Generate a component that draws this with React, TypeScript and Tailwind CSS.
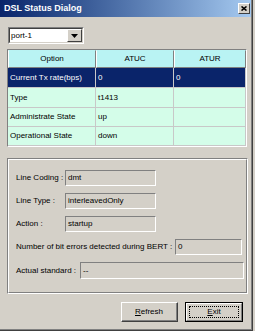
import React from 'react';

interface Row {
  option: string;
  atuc: string;
  atur: string;
  selected?: boolean;
  height: string;
}

const rows: Row[] = [
  { option: 'Current Tx rate(bps)', atuc: '0', atur: '0', selected: true, height: 'h-[20px]' },
  { option: 'Type', atuc: 't1413', atur: '', height: 'h-[20px]' },
  { option: 'Administrate State', atuc: 'up', atur: '', height: 'h-[19px]' },
  { option: 'Operational State', atuc: 'down', atur: '', height: 'h-[19px]' },
];

function Field({ value, className }: { value: string; className: string }) {
  return (
    <div
      className={`flex items-center pl-[2px] border border-t-[#808080] border-l-[#808080] border-r-white border-b-white bg-[#d4d0c8] ${className}`}
    >
      {value}
    </div>
  );
}

function Cell({ text, row }: { text: string; row: Row }) {
  return (
    <div
      className={`${row.height} flex items-center pl-[2px] border-r border-b border-[#c8c8c8] ${
        row.selected ? 'bg-[#0a246a] text-white' : 'bg-[#d4fde9]'
      }`}
    >
      {text}
    </div>
  );
}

export default function App() {
  return (
    <div className="w-[255px] h-[331px] overflow-hidden bg-[#d4d0c8] font-['Liberation_Sans',Arial,sans-serif] text-[8px] leading-none text-black">
      <div className="w-[253px] h-[331px] border-r border-b border-[#404040]">
        <div className="h-full flex flex-col border-r border-b border-[#808080]">
          {/* title bar */}
          <div className="h-[17px] flex items-center pl-[4px] pr-[1px] bg-linear-to-r from-[#0a246a] to-[#a6caf0]">
            <span className="flex-1 text-white font-bold text-[9px]">DSL Status Dialog</span>
            <div className="w-[12px] h-[11px] flex items-center justify-center bg-[#d4d0c8] border border-t-white border-l-white border-r-[#404040] border-b-[#404040]">
              <svg width="6" height="5" viewBox="0 0 6 5">
                <path d="M0.5 0.5 L5.5 4.5 M5.5 0.5 L0.5 4.5" stroke="#000" strokeWidth="1.6" />
              </svg>
            </div>
          </div>

          {/* port combo */}
          <div className="mt-[10px] ml-[8px] w-[76px] h-[17px] border border-t-[#808080] border-l-[#808080] border-r-white border-b-white">
            <div className="h-full flex bg-white border border-t-[#404040] border-l-[#404040] border-r-[#d4d0c8] border-b-[#d4d0c8]">
              <span className="flex-1 flex items-center pl-[1px]">port-1</span>
              <div className="w-[15px] h-full flex items-center justify-center bg-[#d4d0c8] border border-t-white border-l-white border-r-[#404040] border-b-[#404040]">
                <svg width="7" height="4" viewBox="0 0 7 4">
                  <path d="M0 0 H7 L3.5 4 Z" fill="#000" />
                </svg>
              </div>
            </div>
          </div>

          {/* status grid */}
          <div className="mt-[5px] ml-[7px] w-[240px] border border-t-[#808080] border-l-[#808080] border-r-white border-b-white">
            <div className="grid grid-cols-[88px_78px_72px]">
              {['Option', 'ATUC', 'ATUR'].map((h) => (
                <div
                  key={h}
                  className="h-[18px] flex items-center justify-center bg-[#b9f3f3] border border-t-[#b9f3f3] border-l-white border-r-[#808080] border-b-[#808080]"
                >
                  {h}
                </div>
              ))}
              {rows.map((row) => (
                <React.Fragment key={row.option}>
                  <Cell text={row.option} row={row} />
                  <Cell text={row.atuc} row={row} />
                  <Cell text={row.atur} row={row} />
                </React.Fragment>
              ))}
            </div>
          </div>

          {/* details group */}
          <div className="mt-[11px] ml-[7px] w-[241px] h-[136px] border border-t-[#808080] border-l-[#808080] border-r-white border-b-white">
            <div className="h-full flex flex-col gap-[7px] pl-[7px] pt-[10px] border border-t-white border-l-white border-r-[#808080] border-b-[#808080]">
              <div className="flex items-center">
                <span className="w-[49px]">Line Coding :</span>
                <Field value="dmt" className="w-[91px] h-[16px]" />
              </div>
              <div className="flex items-center">
                <span className="w-[49px]">Line Type :</span>
                <Field value="interleavedOnly" className="w-[91px] h-[16px]" />
              </div>
              <div className="flex items-center">
                <span className="w-[49px]">Action :</span>
                <Field value="startup" className="w-[91px] h-[16px]" />
              </div>
              <div className="flex items-center">
                <span className="w-[159px]">Number of bit errors detected during BERT :</span>
                <Field value="0" className="w-[67px] h-[16px]" />
              </div>
              <div className="flex items-center">
                <span className="w-[64px]">Actual standard :</span>
                <Field value="--" className="w-[164px] h-[17px]" />
              </div>
            </div>
          </div>

          {/* buttons */}
          <div className="mt-[8px] flex justify-end gap-[7px] pr-[8px]">
            <div className="w-[57px] h-[20px] border border-t-white border-l-white border-r-[#404040] border-b-[#404040]">
              <div className="h-full flex items-center justify-center border-r border-b border-[#808080]">
                <span>
                  <span className="underline">R</span>efresh
                </span>
              </div>
            </div>
            <div className="w-[58px] h-[20px] border border-black">
              <div className="h-full p-[2px] border border-t-white border-l-white border-r-[#808080] border-b-[#808080]">
                <div className="h-full flex items-center justify-center border border-dotted border-black">
                  <span>
                    <span className="underline">E</span>xit
                  </span>
                </div>
              </div>
            </div>
          </div>
        </div>
      </div>
    </div>
  );
}
